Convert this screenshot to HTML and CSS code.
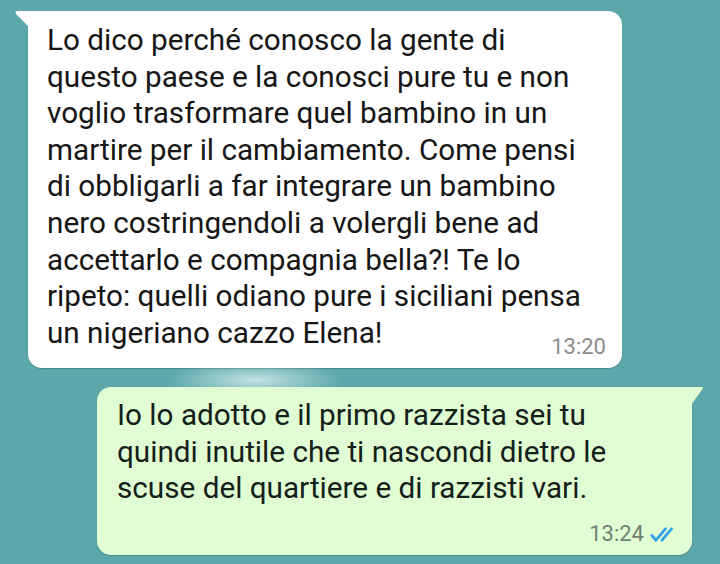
FILE: index.html
```html
<!DOCTYPE html>
<html>
    <head>
        <link rel="stylesheet" href="styles.css">
    </head>
    <body>
        <div class="chat">
            <div class="bubble in">
                <p class="text">Lo dico perché conosco la gente di<br>questo paese e la conosci pure tu e non<br>voglio trasformare quel bambino in un<br>martire per il cambiamento. Come pensi<br>di obbligarli a far integrare un bambino<br>nero costringendoli a volergli bene ad<br>accettarlo e compagnia bella?! Te lo<br>ripeto: quelli odiano pure i siciliani pensa<br>un nigeriano cazzo Elena!</p>
                <div class="meta">
                    <span class="time">13:20</span>
                </div>
            </div>

            <div class="bubble out">
                <p class="text">Io lo adotto e il primo razzista sei tu<br>quindi inutile che ti nascondi dietro le<br>scuse del quartiere e di razzisti vari.</p>
                <div class="meta">
                    <span class="time">13:24</span>
                    <svg class="ticks" width="26" height="15" viewBox="0 0 26 15">
                        <path d="M1.8 8.5 L6 13.2 L15.5 1.8" fill="none" stroke="#36a3e6" stroke-width="2.8" stroke-linecap="round" stroke-linejoin="round"/>
                        <path d="M12 13.2 L21.5 1.8" fill="none" stroke="#36a3e6" stroke-width="2.8" stroke-linecap="round"/>
                    </svg>
                </div>
            </div>
        </div>
    </body>
</html>
```

FILE: styles.css
```css
body {
    margin: 0;
    width: 720px;
    height: 564px;
    overflow: hidden;
    font-family: Roboto, "Noto Sans", sans-serif;
    background:
        radial-gradient(ellipse 90px 20px at 255px 380px, rgba(240, 250, 250, 0.7), rgba(240, 250, 250, 0)),
        #5ba7a9;
}

.chat {
    display: flex;
    flex-direction: column;
    padding-top: 11px;
}

.bubble {
    position: relative;
    box-sizing: border-box;
    border-radius: 14px;
    box-shadow: 0 1px 1px rgba(0, 0, 0, 0.18);
}

.bubble.in {
    margin-left: 28px;
    width: 594px;
    height: 357px;
    padding: 11px 16px 0 19px;
    background-color: #ffffff;
    border-top-left-radius: 0;
    color: #161616;
}

.bubble.in::before {
    content: "";
    position: absolute;
    left: -13px;
    top: 0;
    width: 14px;
    height: 16px;
    background-color: #ffffff;
    clip-path: polygon(0 0, 100% 0, 100% 100%, 1px 3px);
    border-top-left-radius: 2px;
}

.bubble.out {
    margin-top: 19px;
    margin-left: 97px;
    width: 595px;
    height: 168px;
    padding: 10px 19px 0 20px;
    background-color: #e1fdd3;
    border-top-right-radius: 0;
    color: #14201a;
}

.bubble.out::after {
    content: "";
    position: absolute;
    right: -12px;
    top: 0;
    width: 13px;
    height: 18px;
    background-color: #e1fdd3;
    clip-path: polygon(0 0, 100% 0, 0 100%);
    border-top-right-radius: 3px;
}

.text {
    margin: 0;
    font-size: 29.7px;
    line-height: 36.6px;
    white-space: nowrap;
}

.meta {
    display: flex;
    justify-content: flex-end;
    align-items: center;
    gap: 6px;
    height: 24px;
}

.in .meta {
    margin-top: -16px;
}

.out .meta {
    margin-top: 15px;
}

.time {
    font-size: 22px;
    line-height: 24px;
    color: #8c8c8c;
}

.out .time {
    color: #6f7f72;
}

.ticks {
    margin-top: 2px;
    margin-right: -3px;
}
```
